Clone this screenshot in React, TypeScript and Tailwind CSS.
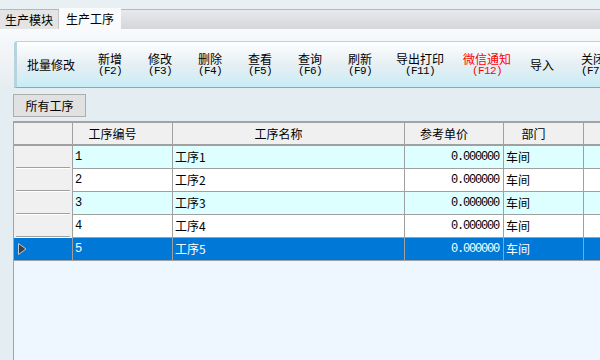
import { Fragment } from 'react'

const cjk = '"Noto Sans CJK SC", "Noto Sans", sans-serif'
const mono = '"Liberation Mono", "DejaVu Sans Mono", monospace'

type ToolItem = { label: string; key?: string; red?: boolean; wide?: boolean; gap: string }

const tools: ToolItem[] = [
  { label: '批量修改', wide: true, gap: 'ml-0' },
  { label: '新增', key: '(F2)', gap: 'ml-[23px]' },
  { label: '修改', key: '(F3)', gap: 'ml-[26px]' },
  { label: '删除', key: '(F4)', gap: 'ml-[26px]' },
  { label: '查看', key: '(F5)', gap: 'ml-[26px]' },
  { label: '查询', key: '(F6)', gap: 'ml-[26px]' },
  { label: '刷新', key: '(F9)', gap: 'ml-[26px]' },
  { label: '导出打印', key: '(F11)', wide: true, gap: 'ml-[24px]' },
  { label: '微信通知', key: '(F12)', wide: true, red: true, gap: 'ml-[19px]' },
  { label: '导入', gap: 'ml-[19px]' },
  { label: '关闭', key: '(F7)', gap: 'ml-[27px]' }
]

const rows = [1, 2, 3, 4, 5].map((n) => ({
  code: String(n),
  name: `工序${n}`,
  price: '0.000000',
  dept: '车间'
}))

const headers = ['工序编号', '工序名称', '参考单价', '部门']

const ToolButton = ({ item }: { item: ToolItem }) => (
  <div
    className={`${item.gap} ${item.wide ? 'w-[48px]' : 'w-[24px]'} shrink-0 flex flex-col items-center justify-center whitespace-nowrap ${
      item.red ? 'text-[#ff0000]' : 'text-black'
    }`}
  >
    <span className="text-[12px] leading-[14px]">{item.label}</span>
    {item.key && (
      <span className="text-[11px] leading-[11px] tracking-[-0.6px]" style={{ fontFamily: mono }}>
        {item.key}
      </span>
    )}
  </div>
)

export default function App() {
  return (
    <div className="w-[600px] h-[360px] overflow-hidden flex flex-col bg-[#e3edf2]" style={{ fontFamily: cjk }}>
      {/* tabs */}
      <div className="h-[29px] shrink-0 flex flex-col">
        <div className="h-[9px] bg-[#e9f0f4]" />
        <div className="flex-1 flex border-t border-[#b3b8bd] bg-gradient-to-b from-[#e7e9ec] to-[#d4d6da]">
          <div className="w-[59px] flex items-center justify-center bg-[#e4e4e4] border-r border-[#c4c4c4] text-[12px] text-black">
            生产模块
          </div>
          <div className="w-[62px] -mt-[2px] flex items-center justify-center bg-[#f8fafc] text-[12px] text-black">
            生产工序
          </div>
        </div>
      </div>

      {/* toolbar */}
      <div className="shrink-0 flex flex-col bg-gradient-to-b from-[#f8fafc] to-[#e6edf1]">
        <div className="h-[12px]" />
        <div className="flex h-[47px]">
          <div className="w-[14px] shrink-0" />
          <div className="flex-1 flex items-center overflow-hidden pl-[10px] rounded-tl-[3px] border-t border-[#c9d0d5] border-b border-b-[#9aa3aa] border-l-[3px] border-l-[#b7d4de] bg-gradient-to-b from-[#fdfeff] via-[#e6eff3] to-[#c8ecf6]">
            {tools.map((t) => (
              <ToolButton key={t.label} item={t} />
            ))}
          </div>
        </div>
      </div>

      {/* all processes button */}
      <div className="shrink-0 pl-[13px] pt-[6px]">
        <div className="w-[73px] h-[23px] flex items-center justify-center bg-[#e1e1e1] border border-[#adadad] text-[12px] text-black">
          所有工序
        </div>
      </div>

      {/* grid */}
      <div className="flex-1 ml-[13px] mt-[4px] border-l border-t-2 border-[#a3a3a3] bg-[#eef6ff] text-[12px] text-black">
        <div className="grid grid-cols-[59px_100px_232px_99px_80px_1fr]">
          <div className="h-[23px] bg-[#f0f0f0] border-r border-b-2 border-[#a0a0a0]" />
          {headers.map((h) => (
            <div
              key={h}
              className="h-[23px] flex items-center justify-center pr-[20px] bg-[#f0f0f0] border-r border-b-2 border-[#a0a0a0]"
            >
              {h}
            </div>
          ))}
          <div className="h-[23px] bg-[#f0f0f0] border-b-2 border-[#a0a0a0]" />

          {rows.map((r, i) => {
            const selected = i === 4
            const bg = selected ? 'bg-[#0078d7] text-white' : i % 2 === 0 ? 'bg-[#ddffff]' : 'bg-white'
            const cell = `h-[23px] flex items-center border-r border-b border-[#a0a0a0] ${bg}`
            return (
              <Fragment key={r.code}>
                <div
                  className={`h-[23px] flex flex-col border-r border-[#a0a0a0] ${
                    selected ? 'bg-[#0078d7] border-b' : 'bg-[#f0f0f0]'
                  }`}
                >
                  <div className="flex-1 flex items-center pl-[4px]">
                    {selected && (
                      <svg width="9" height="12" viewBox="0 0 9 12">
                        <polygon points="0.5,0.5 8,6 0.5,11.5" fill="#404040" stroke="#c8c8c8" strokeWidth="1" />
                      </svg>
                    )}
                  </div>
                  {!selected && <div className="mx-[2px] h-[2px] border-t border-[#a0a0a0] border-b border-b-[#ffffff]" />}
                </div>
                <div className={`${cell} pl-[2px]`} style={{ fontFamily: mono }}>
                  <span className="text-[12px]">{r.code}</span>
                </div>
                <div className={`${cell} pl-[2px]`}>{r.name}</div>
                <div className={`${cell} justify-end pr-[4px]`} style={{ fontFamily: mono }}>
                  <span className="text-[12px] tracking-[-1.2px]">{r.price}</span>
                </div>
                <div className={`${cell} pl-[2px]`}>{r.dept}</div>
                <div className={`h-[23px] border-b border-[#a0a0a0] ${bg}`} />
              </Fragment>
            )
          })}
        </div>
      </div>
    </div>
  )
}
